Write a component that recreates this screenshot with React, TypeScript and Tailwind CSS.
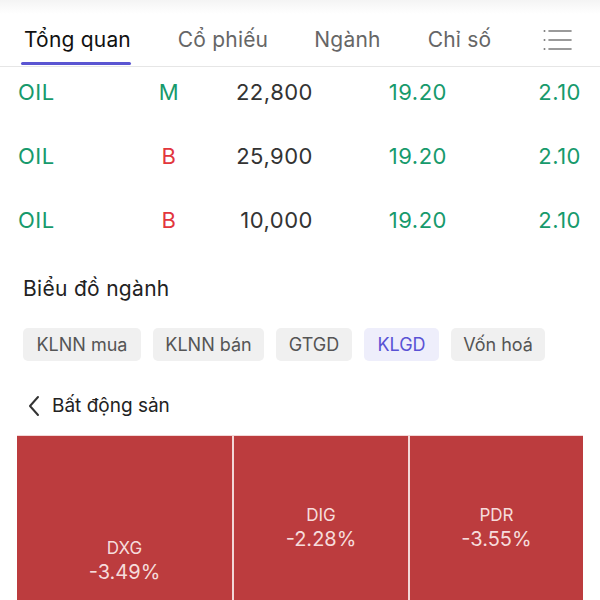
import React from "react";

const font = { fontFamily: "Inter, 'Noto Sans', sans-serif" };

function MenuIcon() {
  return (
    <svg width="30" height="24" viewBox="0 0 30 24" fill="none">
      <g stroke="#7a7a7a" strokeWidth="1.6" strokeLinecap="round">
        <line x1="6" y1="3" x2="28" y2="3" />
        <line x1="6" y1="12" x2="28" y2="12" />
        <line x1="6" y1="21" x2="28" y2="21" />
      </g>
      <g fill="#7a7a7a">
        <circle cx="1.5" cy="3" r="1" />
        <circle cx="1.5" cy="12" r="1" />
        <circle cx="1.5" cy="21" r="1" />
      </g>
    </svg>
  );
}

function Row({ side, price, first }: { side: "M" | "B"; price: string; first?: boolean }) {
  return (
    <div
      className={`flex items-center text-[22px] tracking-[0.5px] pl-[18px] pr-[19px] ${first ? "h-[57px] pb-[7px]" : "h-[64px]"}`}
    >
      <div className="w-[130px] text-[#179a6c]">OIL</div>
      <div className={`w-[42px] text-center ${side === "M" ? "text-[#179a6c]" : "text-[#e2363d]"}`}>{side}</div>
      <div className="w-[123px] text-right text-[#333]">{price}</div>
      <div className="w-[134px] text-right text-[#179a6c]">19.20</div>
      <div className="flex-1 text-right text-[#179a6c]">2.10</div>
    </div>
  );
}

export default function App() {
  const chips: [string, string][] = [
    ["KLNN mua", "w-[118px]"],
    ["KLNN bán", "w-[111px]"],
    ["GTGD", "w-[76px]"],
    ["KLGD", "w-[75px]"],
    ["Vốn hoá", "w-[94px]"],
  ];
  return (
    <div className="w-[600px] h-[600px] overflow-hidden bg-white" style={font}>
      <div className="h-[14px] bg-gradient-to-b from-[#f4f4f4] to-white" />
      <div className="h-[53px] border-b border-[#e6e6e6] flex items-stretch pl-[24px] pr-[27px] text-[21px] tracking-[0.2px]">
        <div className="relative w-[107px] flex items-center text-[#111] whitespace-nowrap">
          Tổng quan
          <div className="absolute left-[-3px] right-0 bottom-[1px] h-[3px] bg-[#5a55d2] rounded-full" />
        </div>
        <div className="w-[90px] ml-[47px] flex items-center justify-center text-[#666] whitespace-nowrap">Cổ phiếu</div>
        <div className="w-[67px] ml-[46px] flex items-center justify-center text-[#666] whitespace-nowrap">Ngành</div>
        <div className="w-[63px] ml-[47px] flex items-center justify-center text-[#666] whitespace-nowrap">Chỉ số</div>
        <div className="flex items-center ml-auto">
          <MenuIcon />
        </div>
      </div>

      <Row side="M" price="22,800" first />
      <Row side="B" price="25,900" />
      <Row side="B" price="10,000" />

      <div className="mt-[23px] pl-[23px] text-[21px] tracking-[0.3px] leading-[28px] text-[#222]">Biểu đồ ngành</div>

      <div className="mt-[25px] pl-[23px] flex gap-[12px]">
        {chips.map(([c, w]) => (
          <div
            key={c}
            className={`${w} h-[33px] rounded-[5px] flex items-center justify-center text-[18px] whitespace-nowrap ${
              c === "KLGD" ? "bg-[#eeeefb] text-[#5a52d5]" : "bg-[#f0f0f0] text-[#555]"
            }`}
          >
            {c}
          </div>
        ))}
      </div>

      <div className="mt-[31px] pl-[27px] flex items-center h-[28px] text-[19px] text-[#222]">
        <svg width="14" height="22" viewBox="0 0 14 22" fill="none">
          <path d="M11 2 L3 11 L11 20" stroke="#333" strokeWidth="2" strokeLinecap="round" strokeLinejoin="round" />
        </svg>
        <span className="ml-[11px]">Bất động sản</span>
      </div>

      <div className="mt-[15px] mx-[17px] flex gap-[2px] bg-[#f3d7d7] pt-[1px]">
        <div className="w-[215px] h-[250px] bg-[#bc3c3e] flex flex-col items-center justify-center text-[#f6dcdc]">
          <div className="text-[17px] leading-[22px]">DXG</div>
          <div className="text-[20px] leading-[26px]">-3.49%</div>
        </div>
        <div className="w-[174px] h-[184px] bg-[#bc3c3e] flex flex-col items-center justify-center text-[#f6dcdc]">
          <div className="text-[17px] leading-[22px]">DIG</div>
          <div className="text-[20px] leading-[26px]">-2.28%</div>
        </div>
        <div className="flex-1 h-[184px] bg-[#bc3c3e] flex flex-col items-center justify-center text-[#f6dcdc]">
          <div className="text-[17px] leading-[22px]">PDR</div>
          <div className="text-[20px] leading-[26px]">-3.55%</div>
        </div>
      </div>
    </div>
  );
}
